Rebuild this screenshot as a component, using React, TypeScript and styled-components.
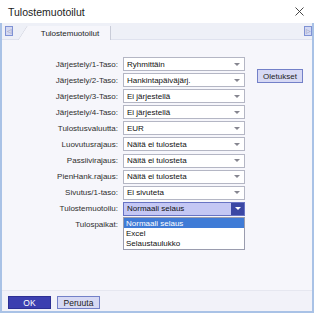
import { Fragment } from "react";
import styled, { createGlobalStyle } from "styled-components";

const GlobalStyle = createGlobalStyle`
    html, body {
        margin: 0;
        padding: 0;
        background: #ffffff;
    }
    * {
        box-sizing: border-box;
    }
`;

const StyledWindow = styled.div`
    display: flex;
    flex-direction: column;
    width: 314px;
    height: 313px;
    background-color: #ffffff;
    font-family: "Liberation Sans", Arial, sans-serif;
    overflow: hidden;
`;

const StyledTitleBar = styled.div`
    display: flex;
    align-items: center;
    justify-content: space-between;
    height: 23px;
    padding: 0 10px 0 8px;
    background-color: #ffffff;
    color: #1b1b1b;
    font-size: 10.5px;
`;

const StyledClose = styled.svg`
    width: 9px;
    height: 9px;
`;

const StyledFrame = styled.div`
    display: flex;
    flex-direction: column;
    flex: 1;
    border-left: 2px solid #a9c2e6;
    border-right: 2px solid #a9c2e6;
    border-bottom: 2px solid #a9c2e6;
`;

const StyledTabBar = styled.div`
    display: flex;
    align-items: flex-end;
    height: 17px;
    padding: 0 0 0 3px;
    background-color: #eef0f7;
    border-bottom: 1px solid #dfe2ee;
`;

const StyledScrollBtn = styled.div<{ $right?: boolean }>`
    display: flex;
    align-items: center;
    justify-content: center;
    width: 8px;
    height: 10px;
    margin-bottom: 3px;
    margin-left: ${(p) => (p.$right ? "auto" : "0")};
    background-color: #d3d8f3;
    border: 1px solid #7f92d4;
    color: #8a8fa8;
    font-size: 6px;
    line-height: 1;
`;

const StyledTab = styled.div`
    position: relative;
    display: flex;
    align-items: center;
    justify-content: center;
    width: 93px;
    height: 14px;
    margin-left: 5px;
    margin-bottom: -1px;
    padding-left: 12px;
    color: #1c1c1c;
    font-size: 8px;
    background-color: #f6f6fb;
    clip-path: polygon(0 100%, 9px 0, 100% 0, 100% 100%);
    border-right: 1px solid #c9ccd8;
`;

const StyledTabEdge = styled.svg`
    position: absolute;
    left: 0;
    top: 0;
    width: 10px;
    height: 14px;
`;

const StyledBody = styled.div`
    flex: 1;
    position: relative;
    padding: 17px 0 0 0;
    background-color: #f6f6fb;
`;

const StyledForm = styled.div`
    display: grid;
    grid-template-columns: 116px 122px 58px;
    grid-auto-rows: 14px;
    column-gap: 5px;
    row-gap: 2.1px;
`;

const StyledLabel = styled.div`
    grid-column: 1;
    display: flex;
    align-items: center;
    justify-content: flex-end;
    color: #2e2e2e;
    font-size: 8px;
    white-space: nowrap;
`;

const StyledSelect = styled.div<{ $active?: boolean }>`
    grid-column: 2;
    position: relative;
    display: flex;
    align-items: center;
    height: 14px;
    padding-left: 3px;
    background-color: ${(p) => (p.$active ? "#c4c7f4" : "#ffffff")};
    border: 1px solid ${(p) => (p.$active ? "#6873c4" : "#b4b6c4")};
    color: #111111;
    font-size: 8px;
    white-space: nowrap;
`;

const StyledArrow = styled.div<{ $active?: boolean }>`
    display: flex;
    align-items: center;
    justify-content: center;
    margin-left: auto;
    width: ${(p) => (p.$active ? "13px" : "14px")};
    height: 100%;
    background-color: ${(p) => (p.$active ? "#3b47a4" : "transparent")};
    &::after {
        content: "";
        border-left: 3px solid transparent;
        border-right: 3px solid transparent;
        border-top: 3px solid ${(p) => (p.$active ? "#ffffff" : "#868690")};
    }
`;

const StyledDefaultBtn = styled.button`
    grid-column: 3;
    grid-row: 1 / span 3;
    align-self: start;
    justify-self: start;
    width: 46px;
    height: 14px;
    margin: 12px 0 0 7px;
    padding: 0;
    background-color: #d7d9f4;
    border: 1px solid #7380c8;
    color: #222222;
    font-family: "Liberation Sans", Arial, sans-serif;
    font-size: 8px;
`;

const StyledList = styled.div`
    position: absolute;
    left: 121px;
    top: 177px;
    width: 122px;
    display: flex;
    flex-direction: column;
    background-color: #ffffff;
    border: 1px solid #9a9cae;
    padding-bottom: 1px;
`;

const StyledOption = styled.div<{ $selected?: boolean }>`
    display: flex;
    align-items: center;
    height: 10px;
    padding-left: 2px;
    background-color: ${(p) => (p.$selected ? "#3f7bd6" : "transparent")};
    color: ${(p) => (p.$selected ? "#ffffff" : "#111111")};
    font-size: 8px;
    white-space: nowrap;
`;

const StyledFooter = styled.div`
    display: flex;
    gap: 6px;
    height: 21px;
    padding: 5px 0 0 6px;
    background-color: #f2f2f9;
    border-top: 1px solid #e6e7f0;
`;

const StyledFooterBtn = styled.button<{ $primary?: boolean }>`
    width: 43px;
    height: 13px;
    padding: 0;
    background-color: ${(p) => (p.$primary ? "#3c3fb0" : "#d7d9f4")};
    border: 1px solid ${(p) => (p.$primary ? "#2c2f94" : "#7380c8")};
    color: ${(p) => (p.$primary ? "#ffffff" : "#222222")};
    font-family: "Liberation Sans", Arial, sans-serif;
    font-size: 8.5px;
`;

const rows = [
    { label: "Järjestely/1-Taso:", value: "Ryhmittäin" },
    { label: "Järjestely/2-Taso:", value: "Hankintapäiväjärj." },
    { label: "Järjestely/3-Taso:", value: "Ei järjestellä" },
    { label: "Järjestely/4-Taso:", value: "Ei järjestellä" },
    { label: "Tulostusvaluutta:", value: "EUR" },
    { label: "Luovutusrajaus:", value: "Näitä ei tulosteta" },
    { label: "Passiivirajaus:", value: "Näitä ei tulosteta" },
    { label: "PienHank.rajaus:", value: "Näitä ei tulosteta" },
    { label: "Sivutus/1-taso:", value: "Ei sivuteta" },
    { label: "Tulostemuotoilu:", value: "Normaali selaus", active: true },
];

const options = ["Normaali selaus", "Excel", "Selaustaulukko"];

const App = () => {
    return (
        <>
            <GlobalStyle />
            <StyledWindow>
                <StyledTitleBar>
                    <span>Tulostemuotoilut</span>
                    <StyledClose viewBox="0 0 9 9">
                        <path d="M0.5 0.5 L8.5 8.5 M8.5 0.5 L0.5 8.5" stroke="#333" strokeWidth="0.9" />
                    </StyledClose>
                </StyledTitleBar>
                <StyledFrame>
                    <StyledTabBar>
                        <StyledScrollBtn>◁</StyledScrollBtn>
                        <StyledTab>
                            <StyledTabEdge viewBox="0 0 10 14">
                                <path d="M0 14 L9 0" stroke="#c9ccd8" strokeWidth="1" />
                            </StyledTabEdge>
                            Tulostemuotoilut
                        </StyledTab>
                        <StyledScrollBtn $right>▷</StyledScrollBtn>
                    </StyledTabBar>
                    <StyledBody>
                        <StyledForm>
                            {rows.map((r, i) => (
                                <Fragment key={i}>
                                    <StyledLabel style={{ gridRow: i + 1 }}>{r.label}</StyledLabel>
                                    <StyledSelect style={{ gridRow: i + 1 }} $active={r.active}>
                                        {r.value}
                                        <StyledArrow $active={r.active} />
                                    </StyledSelect>
                                </Fragment>
                            ))}
                            <StyledLabel style={{ gridRow: rows.length + 1 }}>Tulospaikat:</StyledLabel>
                            <StyledDefaultBtn>Oletukset</StyledDefaultBtn>
                        </StyledForm>
                        {/* avattu pudotusvalikko */}
                        <StyledList>
                            {options.map((o, i) => (
                                <StyledOption key={o} $selected={i === 0}>{o}</StyledOption>
                            ))}
                        </StyledList>
                    </StyledBody>
                    <StyledFooter>
                        <StyledFooterBtn $primary>OK</StyledFooterBtn>
                        <StyledFooterBtn>Peruuta</StyledFooterBtn>
                    </StyledFooter>
                </StyledFrame>
            </StyledWindow>
        </>
    );
};

export default App;
